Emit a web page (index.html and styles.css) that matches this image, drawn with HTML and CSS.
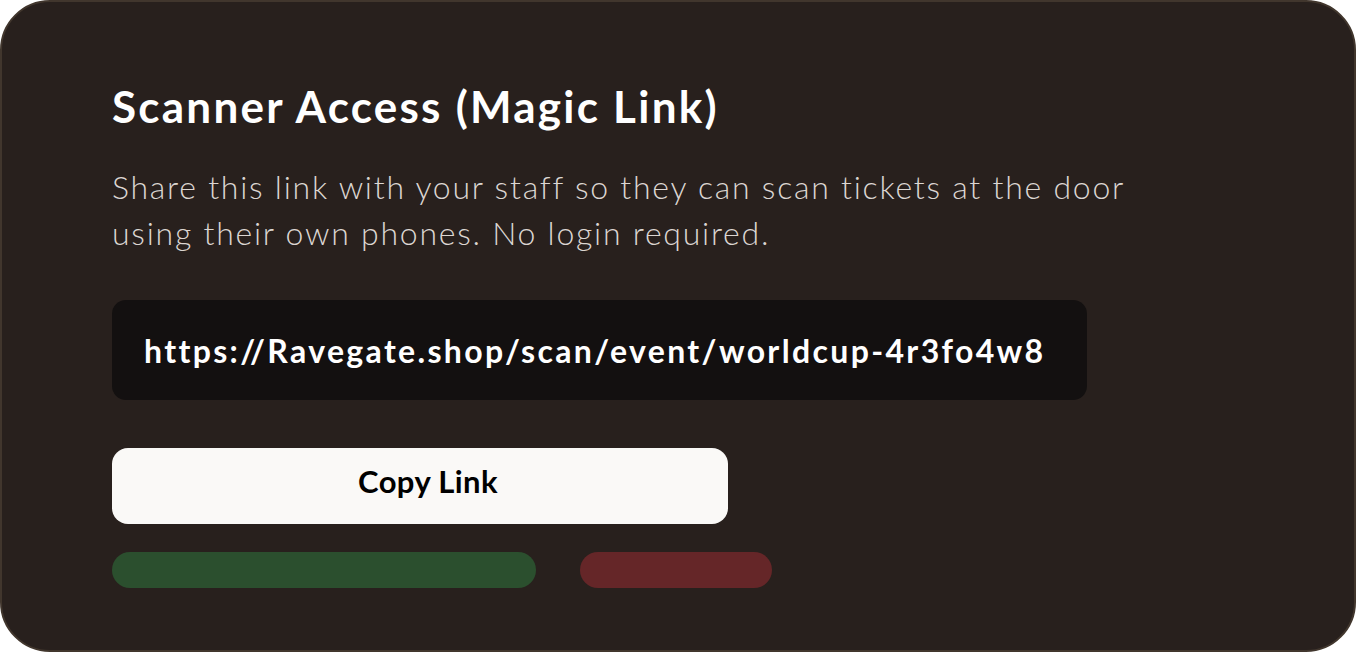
FILE: index.html
```html
<!DOCTYPE html>
<html lang="en">
<head>
<meta charset="utf-8">
<title>Scanner Access</title>
<link rel="stylesheet" href="styles.css">
</head>
<body>
<section class="card">
  <h1 class="title">Scanner Access (Magic Link)</h1>
  <p class="desc">Share this link with your staff so they can scan tickets at the door using their own phones. No login required.</p>
  <div class="url-box"><span class="url">https://Ravegate.shop/scan/event/worldcup-4r3fo4w8</span></div>
  <button class="copy-btn" type="button">Copy Link</button>
  <div class="status-row">
    <span class="pill pill-green"></span>
    <span class="pill pill-red"></span>
  </div>
</section>
</body>
</html>
```

FILE: styles.css
```css
html, body {
  margin: 0;
  padding: 0;
  background: #ffffff;
}
body {
  font-family: "Lato", "Noto Sans", sans-serif;
}
.card {
  box-sizing: border-box;
  width: 1356px;
  height: 652px;
  background: #28201d;
  border: 2px solid #41362d;
  border-radius: 50px;
  padding: 74px 110px 0 110px;
}
.title {
  margin: 0;
  font-size: 44px;
  font-weight: 700;
  line-height: 60px;
  letter-spacing: 2.25px;
  color: #ffffff;
}
.desc {
  margin: 28px 0 0 0;
  max-width: 1060px;
  font-size: 32px;
  font-weight: 300;
  line-height: 46px;
  letter-spacing: 1.75px;
  color: #dcd6d2;
}
.url-box {
  margin-top: 44px;
  width: 975px;
  height: 100px;
  box-sizing: border-box;
  background: #131010;
  border-radius: 14px;
  padding: 0 32px;
  display: flex;
  align-items: center;
}
.url {
  font-size: 32px;
  font-weight: 700;
  letter-spacing: 2.35px;
  color: #ffffff;
}
.copy-btn {
  display: flex;
  align-items: center;
  justify-content: center;
  box-sizing: border-box;
  margin-top: 48px;
  width: 616px;
  height: 76px;
  padding: 0 0 11px 16px;
  border: none;
  border-radius: 16px;
  background: #faf9f7;
  font-family: inherit;
  font-size: 31px;
  font-weight: 700;
  letter-spacing: 0.4px;
  color: #000000;
}
.status-row {
  margin-top: 28px;
  display: flex;
  gap: 44px;
}
.pill {
  display: block;
  height: 36px;
  border-radius: 18px;
}
.pill-green {
  width: 424px;
  background: #2b4f2e;
}
.pill-red {
  width: 192px;
  background: #652628;
}
```
